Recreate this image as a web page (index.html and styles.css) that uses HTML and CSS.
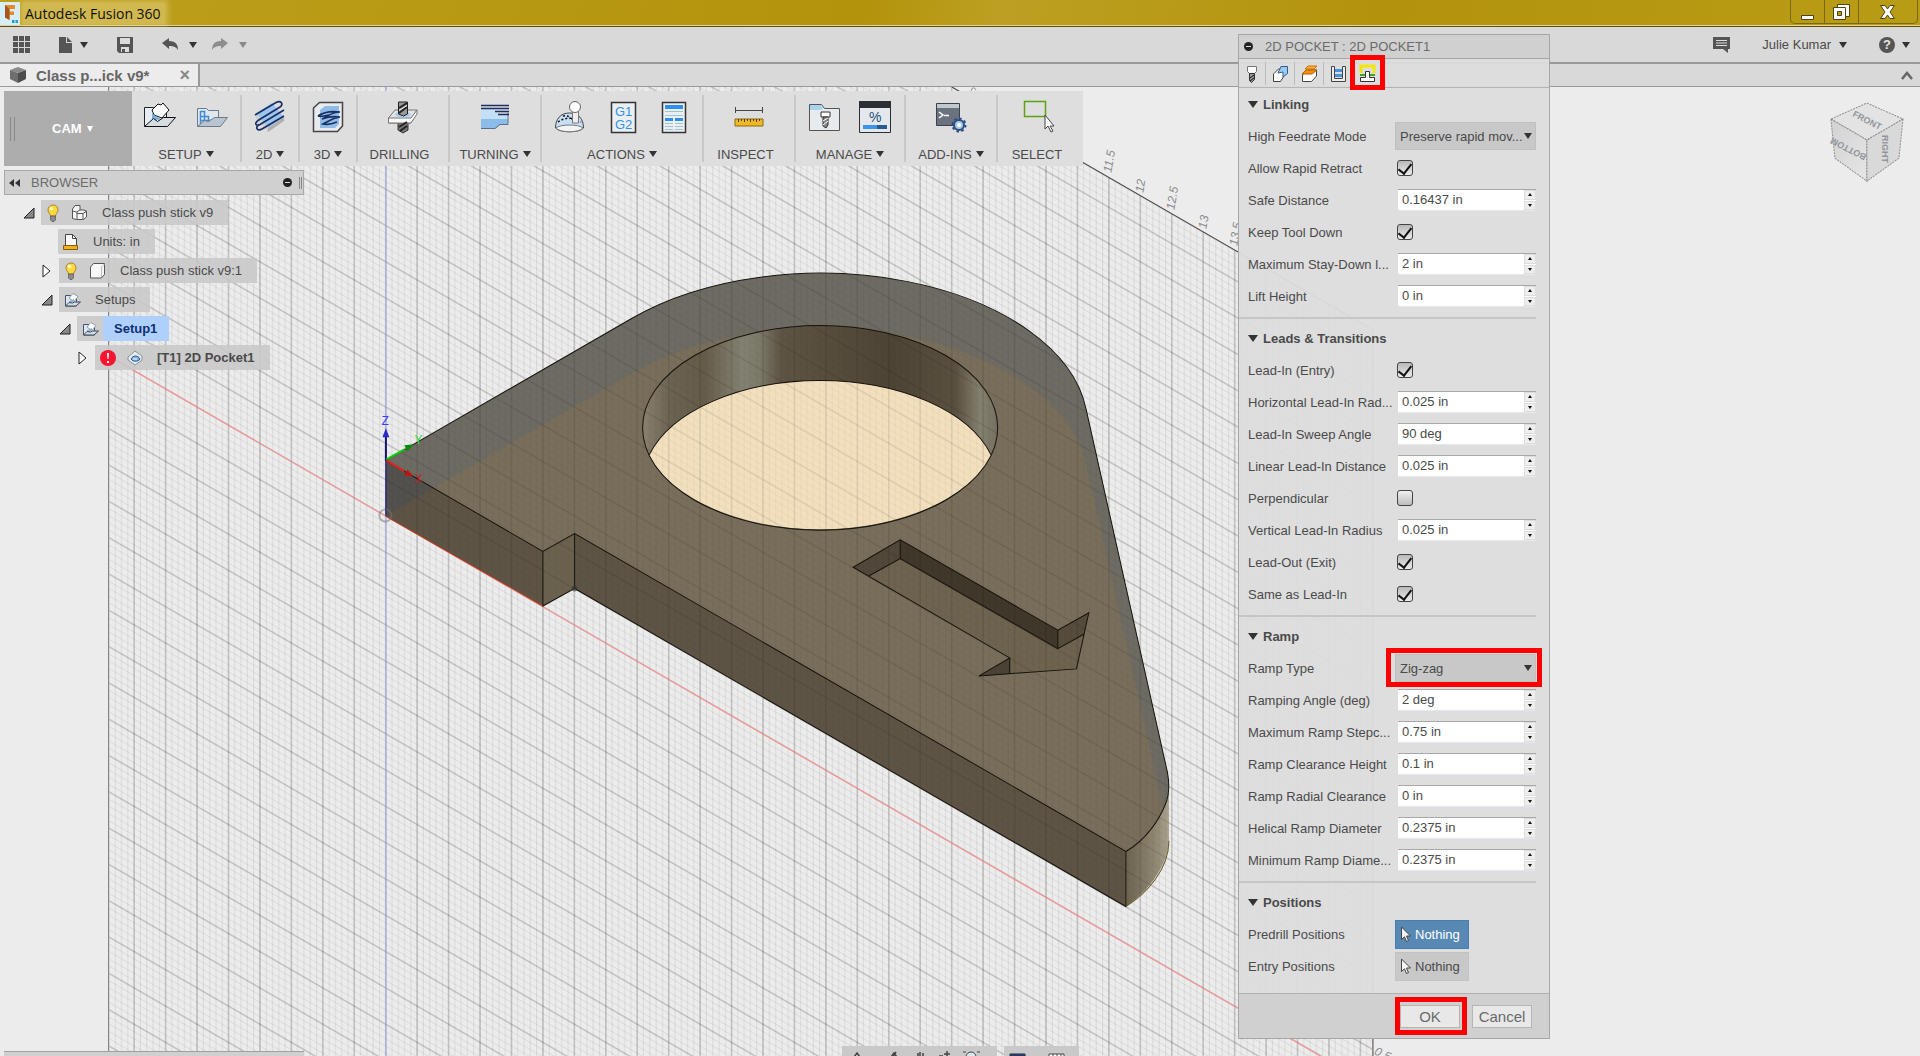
FILE: index.html
```html
<!DOCTYPE html>
<html lang="en">
<head>
    <meta charset="UTF-8">
    <meta name="viewport" content="width=device-width, initial-scale=1.0">
    <title>Autodesk Fusion 360</title>
    <link rel="stylesheet" href="styles.css">
</head>
<body>

    <!-- Shared icons -->
    <svg class="defs" width="0" height="0">
        <symbol id="bulb" viewBox="0 0 14 18">
            <path d="M7 1C3.500 1 2 3.500 2 6c0 3 2.500 3.500 2.500 6h5C9.500 9.500 12 9 12 6c0-2.500-1.500-5-5-5z" fill="#ffd83d" stroke="#a8862c"/>
            <circle cx="5.500" cy="4.500" r="1.800" fill="#fff8cf"/>
            <path d="M4.500 12h5v4l-1.500 1.500h-2L4.500 16z" fill="#8c8c8c" stroke="#444" stroke-width=".6"/>
        </symbol>
        <symbol id="setup" viewBox="0 0 17 16">
            <path d="M1.500 14V3.500h5L8 5h4.500v9z" fill="#dde6f0" stroke="#46536a"/>
            <path d="M5 6l4-4.500 5 3L10 9.500z" fill="#fff" stroke="#7d8b9c" stroke-width=".8"/>
            <path d="M5 9v3l5-2.500V7z" fill="#8fb4dc"/>
            <path d="M1.500 14l3.500-3.500 3.500.5 2-1h6L12 14z" fill="#d3dbe4" stroke="#3c4659"/>
        </symbol>
        <symbol id="cursor" viewBox="0 0 12 17">
            <path d="M1.500 1v12.500l3-2.700 2 4.700 2-.9-2-4.600h4z" fill="#f4f4f4" stroke="#444"/>
        </symbol>
    </svg>

    <header class="titlebar">
        <svg class="app-icon" width="20" height="23" viewBox="0 0 20 23">
            <path d="M0 0h20v23H0z" fill="#d6eef9"/>
            <path d="M5 3h10v4H9.500v2.500H14V13H9.500v5L5 15.500z" fill="#e58a2b"/>
            <path d="M5 3l4.500 4v11L5 15.500z" fill="#a9551a"/>
            <path d="M12 18h2.500v3H12zm3.500 0H18v3h-2.500z" fill="#1a9ed9"/>
        </svg>
        <span class="app-name">Autodesk Fusion 360</span>
        <div class="window-buttons">
            <button aria-label="Minimize"><svg width="16" height="18"><path d="M1.500 12.500h12v4h-12z" fill="#fff" stroke="#4d4410"/></svg></button>
            <button aria-label="Restore"><svg width="20" height="18"><path d="M5.500 1.500h12v12h-12z" fill="#fff" stroke="#4d4410"/><path d="M1.500 4.500h12v12h-12z" fill="#fff" stroke="#4d4410"/><path d="M5.500 8.500h4v4h-4z" fill="#b99b14" stroke="#4d4410"/></svg></button>
            <button aria-label="Close"><svg width="18" height="16"><path d="M1.500 1.500h4.500l2.500 3.500 2.500-3.500h4.500L11 8l4.500 6.500H11L8.500 11 6 14.500H1.500L6 8z" fill="#fff" stroke="#4d4410"/></svg></button>
        </div>
    </header>

    <div class="appbar">
        <div class="quick">
            <button aria-label="Data panel"><svg width="17" height="17" fill="#555"><path d="M0 0h5v5H0zM6 0h5v5H6zM12 0h5v5h-5zM0 6h5v5H0zM6 6h5v5H6zM12 6h5v5h-5zM0 12h5v5H0zM6 12h5v5H6zM12 12h5v5h-5z"/></svg></button>
            <button class="file" aria-label="File"><svg width="13" height="16" fill="#555"><path d="M0 0h7v6h6v10H0z"/><path d="M8 0l5 5H8z"/></svg><span class="caret"></span></button>
            <button class="save" aria-label="Save"><svg width="16" height="16"><path d="M0 0h16v16H2l-2-2z" fill="#555"/><path d="M3 1h10v6H3zM4 10h8v5H4z" fill="#dcdcdc"/><path d="M5 12h3v3H5z" fill="#555"/></svg></button>
            <button class="undo" aria-label="Undo"><svg width="17" height="13"><path d="M0 5l7-5v3c6 0 9 3 9 9-2-3-4-4-9-4v3z" fill="#555"/></svg><span class="caret"></span></button>
            <button class="redo" aria-label="Redo"><svg width="17" height="13"><path d="M16 5L9 0v3C3 3 0 6 0 12c2-3 4-4 9-4v3z" fill="#8d8d8d"/></svg><span class="caret"></span></button>
        </div>
        <div class="account">
            <button aria-label="Comments"><svg width="17" height="16"><path d="M0 0h17v12h-2v4l-5-4H0z" fill="#555"/><path d="M3 3.500h11M3 6h11M3 8.500h11" stroke="#ddd"/></svg></button>
            <button class="user">Julie Kumar <span class="caret"></span></button>
            <button class="help" aria-label="Help"><span class="help-mark">?</span><span class="caret"></span></button>
        </div>
    </div>

    <nav class="tabs">
        <a class="tab" href="#">
            <svg width="17" height="16"><path d="M0 3l8-3 8 3-8 3z" fill="#8a8a8a"/><path d="M0 3l8 3v10l-8-4z" fill="#6e6e6e"/><path d="M16 3L8 6v10l8-4z" fill="#4c4c4c"/></svg>
            <span>Class p...ick v9*</span>
            <span class="close">×</span>
        </a>
        <button class="collapse" aria-label="Collapse"><svg width="12" height="9"><path d="M1 8l5-6 5 6" fill="none" stroke="#666" stroke-width="2.500"/></svg></button>
    </nav>

    <main class="workspace">

        <!-- 3D canvas -->
        <svg class="canvas" viewBox="0 88 1920 968" preserveAspectRatio="xMidYMid slice">
            <defs>
                <!-- isometric grid: one major cell split in five, sheared by 30 degrees -->
                <pattern id="grid" width="31.410" height="36.270" patternUnits="userSpaceOnUse" patternTransform="translate(386.300 516.500) skewY(30)">
                    <path d="M6.280 0v37M12.560 0v37M18.840 0v37M25.120 0v37" stroke="#000" stroke-opacity=".08"/>
                    <path d="M0 7.250h32M0 14.500h32M0 21.750h32M0 29h32" stroke="#000" stroke-opacity=".08"/>
                    <path d="M0 0v37M31.410 0v37" stroke="#000" stroke-opacity=".3"/>
                    <path d="M0 0h32M0 36.270h32" stroke="#000" stroke-opacity=".32"/>
                </pattern>
                <linearGradient id="bore" x1="643" x2="998" y1="0" y2="0" gradientUnits="userSpaceOnUse">
                    <stop offset="0" stop-color="#8a826f"/>
                    <stop offset=".08" stop-color="#6b6351"/>
                    <stop offset=".17" stop-color="#655b49"/>
                    <stop offset=".28" stop-color="#838171"/>
                    <stop offset=".33" stop-color="#7c7969"/>
                    <stop offset=".39" stop-color="#5e5443"/>
                    <stop offset=".7" stop-color="#4d4435"/>
                    <stop offset=".88" stop-color="#5a5040"/>
                    <stop offset=".95" stop-color="#85816f"/>
                    <stop offset="1" stop-color="#757061"/>
                </linearGradient>
                <linearGradient id="tip" x1="1126" x2="1169" y1="0" y2="0" gradientUnits="userSpaceOnUse">
                    <stop offset="0" stop-color="#6c6350"/>
                    <stop offset=".7" stop-color="#918973"/>
                    <stop offset="1" stop-color="#aaa38f"/>
                </linearGradient>
                <linearGradient id="cubeLeft" x2="1" y2="1">
                    <stop offset="0" stop-color="#d2d2d2"/>
                    <stop offset="1" stop-color="#e6e6e6"/>
                </linearGradient>
                <clipPath id="gridArea"><path d="M110 88H952L1372 330.500V1056H110z"/></clipPath>
                <path id="top" d="M386.300 461L631.500 319.500A267 154.200 0 0 1 1086 410L1167.300 773C1169 783 1170 794 1165 805C1159 820 1146 840 1125.700 851.700L575 534L543.300 552z"/>
                <clipPath id="topClip"><use href="#top"/></clipPath>
            </defs>

            <path class="sky" d="M0 88h1920v968H0z"/>
            <g clip-path="url(#gridArea)">
                <path d="M110 88h1262v968H110z" fill="url(#grid)"/>
            </g>
            <path d="M109.500 88V1056" stroke="#777"/>
            <path d="M952 88L1372.500 330.500V1056" fill="none" stroke="#444"/>
            <path d="M971 92q2-6 5-1M978 92l3 3" fill="none" stroke="#999"/>
            <path d="M110 357L1320 1056" stroke="#ff8d8d"/>
            <path d="M386.500 88V1056" stroke="#a5a5ee"/>

            <g class="scale">
                <text transform="translate(1111 174) rotate(-80)">11.5</text>
                <text transform="translate(1143 194) rotate(-80)">12</text>
                <text transform="translate(1174 211) rotate(-80)">12.5</text>
                <text transform="translate(1206 230) rotate(-80)">13</text>
                <text transform="translate(1237 247) rotate(-80)">13.5</text>
                <text transform="translate(1373 1054) rotate(25)">0.5</text>
            </g>

            <!-- part body -->
            <use href="#top" fill="#6d6b62"/>
            <g clip-path="url(#topClip)">
                <use href="#top" y="55" fill="#786e5b"/>
                <path d="M386 516L543 610 1126 907V780L560 500z" fill="#786e5b"/>
            </g>
            <path d="M386.300 461L543.300 552V606.500L386.300 516.500z" fill="#5d5445"/>
            <path d="M386.300 461L434 488.500 386.300 516.500z" fill="#53514d"/>
            <path d="M543.300 552L575 534V589L543.300 606.500z" fill="#6b624e"/>
            <path d="M575 534L1125.700 851.700V906.700L575 589z" fill="#5d5445"/>
            <path d="M1125.700 851.700C1146 840 1159 820 1165 805Q1168.700 796 1168.700 785V841Q1168.700 850 1165 859C1157 879 1144 894 1125.700 906.700z" fill="url(#tip)"/>

            <!-- through hole -->
            <ellipse cx="820.300" cy="428.500" rx="177.400" ry="102.200" fill="url(#bore)"/>
            <path d="M649.600 455.500A177.400 102.200 0 0 1 991 455.500A177.400 102.200 0 0 1 649.600 455.500z" fill="#f2dfbd"/>

            <!-- arrow pocket -->
            <path d="M853.300 567.700L900.300 540.300 1057.700 630.700 1088.700 613.300 1076.300 669.300 979 676.300 1009.700 658.300z" fill="#6d634f"/>
            <path d="M853.300 567.700L900.300 540.300V559L869.300 576.300z" fill="#51483a"/>
            <path d="M900.300 540.300L1057.700 630.700V649L900.300 559z" fill="#3f382b"/>
            <path d="M1057.700 630.700L1088.700 613.300 1083.700 634.700 1057.700 649z" fill="#554c3c"/>
            <path d="M979 676.300L1009.700 658.300V674.300z" fill="#4b4335"/>

            <!-- grid seen through the part -->
            <path d="M386.300 461L631.500 319.500A267 154.200 0 0 1 1086 410L1167.300 773Q1170 785 1168.700 841Q1166 880 1125.700 906.700L575 589 543.300 606.500 386.300 516.500z" fill="url(#grid)" opacity=".5"/>

            <g class="edges">
                <use href="#top"/>
                <ellipse cx="820.300" cy="428.500" rx="177.400" ry="102.200"/>
                <path d="M649.600 455.500A177.400 102.200 0 0 1 991 455.500"/>
                <path d="M853.300 567.700L900.300 540.300 1057.700 630.700 1088.700 613.300 1076.300 669.300 979 676.300 1009.700 658.300z"/>
                <path d="M869.300 576.300L900.300 559 1057.700 649 1083.700 634.700M900.300 540.300V559M1057.700 630.700V649M1009.700 658.300V674.300"/>
                <path d="M543.300 552V606.500L575 589V534M1125.700 851.700V906.700L575 589"/>
                <path d="M1168.700 841C1168.700 870 1146 894 1125.700 906.700" stroke="#6b5a2c"/>
            </g>
            <path d="M386.300 516.500L543.300 606.500" stroke="#a83c20"/>
            <circle cx="575" cy="589" r="3" fill="#333" opacity=".6"/>
            <circle cx="386" cy="516" r="6" fill="none" stroke="#777" stroke-width="2" opacity=".5"/>

            <!-- origin triad -->
            <path d="M386.500 516V461" stroke="#1c1c8c"/>
            <path d="M386.500 461V435" stroke="#15156b" stroke-width="2"/>
            <path d="M386.500 429l3.500 9h-7z" fill="#2a2ac8"/>
            <path d="M387 460L405 450" stroke="#0bd20b" stroke-width="2"/>
            <path d="M414 445l-9 1 3 6z" fill="#0a8a0a"/>
            <path d="M387 461L405 472" stroke="#e32020" stroke-width="2"/>
            <path d="M414 477l-6-7-3 6z" fill="#c01212"/>
            <text x="382" y="426" class="axis z">Z</text>
            <text x="415" y="445" class="axis y">Y</text>
            <text x="415" y="484" class="axis x">X</text>

            <!-- view cube -->
            <g stroke="#8e8e8e" stroke-dasharray="2 1">
                <path d="M1866 104L1902 120 1866 141 1830 120z" fill="#e3e3e3"/>
                <path d="M1830 120L1866 141V182L1834 159z" fill="url(#cubeLeft)"/>
                <path d="M1902 120L1866 141V182L1898 159z" fill="#d9d9d9"/>
            </g>
            <g class="cube-text">
                <text transform="translate(1851 117) rotate(27)">FRONT</text>
                <text transform="translate(1866 156) rotate(207)">BOTTOM</text>
                <text transform="translate(1881 136) rotate(90)">RIGHT</text>
            </g>
        </svg>

        <div class="overlay">
            <div class="ribbon">
                <button class="cam"><span class="grip"></span>CAM <span class="caret"></span></button>

                <section class="group setup">
                    <div class="icons">
                        <svg width="34" height="32" viewBox="0 0 34 32">
                            <path d="M1.500 25V6.500h9l2 2h11V25z" fill="#e6edf5" stroke="#222"/>
                            <path d="M9 9l6-6 3 1 2-2 6 7-7 8-8-3z" fill="#fff" stroke="#111"/>
                            <path d="M9 12v8l9-2-7-4z" fill="#7db0e0"/>
                            <path d="M1.500 25.500l9-8 4 3 6-4h12l-8 9z" fill="#d4dce4" stroke="#111"/>
                        </svg>
                        <svg width="34" height="32" viewBox="0 0 34 32">
                            <path d="M2.500 25V7.500h9l2 2h10V25z" fill="#dfe6ed" stroke="#6d7a88"/>
                            <path d="M5.500 10v13M5.500 10.500h4v5h4v8M5.500 15.500h8M9.500 15v8M5.500 19.500h10" fill="none" stroke="#3f8bd6" stroke-width="1.500"/>
                            <path d="M2.500 25.500l7-6 4 1 6-4h13l-7 9z" fill="#b8c4d0" stroke="#6d7a88"/>
                        </svg>
                    </div>
                    <button class="label">SETUP <span class="caret"></span></button>
                </section>
                <section class="group two-d">
                    <div class="icons">
                        <svg width="34" height="34" viewBox="0 0 34 34">
                            <path d="M3 13L19 3l12 14-16 11z" fill="#9cc6ee"/>
                            <path d="M15 28l16-11v4L15 32z" fill="#b0b0b0"/>
                            <path d="M3 13l12 15v4L3 18z" fill="#d0d0d0"/>
                            <path d="M2 15L23 2.500c5-2.500 8 1.500 4 4.500L5 20.500c-4 3-2 6 2 4L31 10M31 16L9 29c-5 3-7-2-3-4.500" fill="none" stroke="#1b2f66" stroke-width="1.700"/>
                        </svg>
                    </div>
                    <button class="label">2D <span class="caret"></span></button>
                </section>
                <section class="group three-d">
                    <div class="icons">
                        <svg width="32" height="32" viewBox="0 0 32 32">
                            <path d="M1.500 7l6-5.500h23V25l-5 5.500h-24z" fill="#e9ecef" stroke="#444" stroke-width="1.500"/>
                            <path d="M8 9l5-4h14v18l-4 4H8z" fill="#8fbde8"/>
                            <path d="M6 15c7-5 14-5 22-4-8 0-12 4-18 7 5-2 11-3 18-2-8 1-11 4-17 7 5 1 9 0 14-2M6 15c2 1 7 0 11-1" fill="none" stroke="#1b2f66" stroke-width="1.600"/>
                        </svg>
                    </div>
                    <button class="label">3D <span class="caret"></span></button>
                </section>
                <section class="group drilling">
                    <div class="icons">
                        <svg width="32" height="34" viewBox="0 0 32 34">
                            <path d="M11 20h10v10l-5 3-5-3z" fill="#777" stroke="#333"/>
                            <path d="M1.500 18L8 10h22l-6 9v4H1.500z" fill="#e3e3e3" stroke="#777"/>
                            <path d="M1.500 18H24l6-8v4l-6 9H1.500z" fill="#fafafa" stroke="#777"/>
                            <ellipse cx="16" cy="14.500" rx="8" ry="3" fill="#a8ccec"/>
                            <path d="M11.500 2h9v12l-4 2-5-2z" fill="#999" stroke="#222"/>
                            <path d="M12 8l8-5M12 13l8-6M12 27l8-5M13 31l7-5" stroke="#222" stroke-width="2"/>
                            <path d="M12 10.500l8-5" stroke="#eee"/>
                        </svg>
                    </div>
                    <button class="label plain">DRILLING</button>
                </section>
                <section class="group turning">
                    <div class="icons">
                        <svg width="30" height="28" viewBox="0 0 30 28">
                            <path d="M1 6h12l7 7h8v9h-8l-5 4H1z" fill="#8bbcea"/>
                            <path d="M1 6h12l7 7h8v3H1z" fill="#c4e0f7"/>
                            <path d="M28 9.500v12h-8l-5 4H1" fill="none" stroke="#5b6f88"/>
                            <path d="M1 2.500h28M1 5.500h28M15 8.500h14M18 11.500h11" stroke="#1b2f66" stroke-width="1.500"/>
                        </svg>
                    </div>
                    <button class="label">TURNING <span class="caret"></span></button>
                </section>
                <section class="group actions">
                    <div class="icons">
                        <svg width="32" height="34" viewBox="0 0 32 34">
                            <path d="M1.500 28c0-9 5-15 14-15s14 6 14 15c-4 5-24 5-28 0z" fill="#c6dff5" stroke="#444"/>
                            <path d="M2 28c4-4 23-4 27 0-4 5-23 5-27 0z" fill="#f4f4f4" stroke="#777"/>
                            <path d="M4 22c7-5 15-5 23 0M9 16c4-1 9 1 12 8" fill="none" stroke="#111" stroke-width="1.500" stroke-dasharray="2 2"/>
                            <path d="M18.500 11h6v12h-6z" fill="#eee" stroke="#777"/>
                            <circle cx="21" cy="7" r="5.500" fill="#fff" stroke="#666"/>
                        </svg>
                        <svg class="post" width="27" height="33">
                            <path d="M1.500 1.500h24v30h-24z" fill="#eceff2" stroke="#333" stroke-width="1.500"/>
                            <text x="5" y="15">G1</text><text x="5" y="28">G2</text>
                        </svg>
                        <svg width="26" height="33">
                            <path d="M1.500 1.500h23v30h-23z" fill="#eceff2" stroke="#333" stroke-width="1.500"/>
                            <path d="M4 4h18v4H4zM4 17h8v3H4zM14 17h8v3h-8z" fill="#2f8fef"/>
                            <path d="M4 10.500h18M4 14.500h18M4 22.500h8M14 22.500h8M4 25.500h8M14 25.500h8M4 28.500h8M14 28.500h8" stroke="#9cc4d8"/>
                        </svg>
                    </div>
                    <button class="label">ACTIONS <span class="caret"></span></button>
                </section>
                <section class="group inspect">
                    <div class="icons">
                        <svg width="30" height="22">
                            <path d="M1.500 1v6M28.500 1v6M1 4.500h28" stroke="#444" fill="none"/>
                            <path d="M1 13h28v7H1z" fill="#efb925" stroke="#8b6a12"/>
                            <path d="M4.500 13v3M7.500 13v2M10.500 13v3M13.500 13v2M16.500 13v3M19.500 13v2M22.500 13v3M25.500 13v2" stroke="#5a4205"/>
                        </svg>
                    </div>
                    <button class="label plain">INSPECT</button>
                </section>
                <section class="group manage">
                    <div class="icons">
                        <svg width="33" height="32">
                            <path d="M1.500 29.500V3.500h12l3 4h15v22z" fill="#e8ebee" stroke="#555"/>
                            <path d="M2 4h11l2 3-2 2H2z" fill="#acd3ee"/>
                            <path d="M13 11h9v5h-9z" fill="#fff" stroke="#333"/><path d="M15 16h5v8l-2 3-3-2z" fill="#888" stroke="#333"/>
                            <path d="M15 20l5-3M15 24l5-4" stroke="#fff"/>
                        </svg>
                        <svg class="percent" width="33" height="33">
                            <path d="M.500.500h31v31H.500z" fill="#e4e8ed" stroke="#2b2e33"/>
                            <path d="M0 0h32v7H0z" fill="#2b2e33"/>
                            <path d="M4 24h14v4H4z" fill="#3a94ee"/><path d="M18 24h10v4H18z" fill="#285a8e"/>
                            <text x="10" y="21">%</text>
                        </svg>
                    </div>
                    <button class="label">MANAGE <span class="caret"></span></button>
                </section>
                <section class="group addins">
                    <div class="icons">
                        <svg width="32" height="32" viewBox="0 0 32 32">
                            <path d="M1.500 2.500h23v22h-23z" fill="#6a727e" stroke="#3b424d"/>
                            <path d="M2 3h22v4H2z" fill="#c3c8ce"/>
                            <path d="M4 11l4 3-4 3M9 14.500h5" fill="none" stroke="#fff" stroke-width="1.500"/>
                            <circle cx="24" cy="24" r="5" fill="#a9c8e8" stroke="#2d4f80" stroke-width="2"/>
                            <circle cx="24" cy="24" r="6.500" fill="none" stroke="#2d4f80" stroke-width="2" stroke-dasharray="2.500 2.500"/>
                            <circle cx="24" cy="24" r="2" fill="#fff"/>
                        </svg>
                    </div>
                    <button class="label">ADD-INS <span class="caret"></span></button>
                </section>
                <section class="group select">
                    <div class="icons">
                        <svg width="32" height="34">
                            <path d="M1.500 1.500h21v15h-21z" fill="none" stroke="#5da30f" stroke-width="1.500"/>
                            <path d="M22 15v14l3-3 3 6 2-1-3-5h4z" fill="#fff" stroke="#444"/>
                        </svg>
                    </div>
                    <button class="label plain">SELECT</button>
                </section>
            </div>

            <div class="browser-head">
                <svg width="11" height="8"><path d="M5 0v8L0 4zM11 0v8L6 4z" fill="#333"/></svg>
                <span>BROWSER</span>
                <i class="minus"></i>
                <i class="grip"></i>
            </div>
            <ul class="tree">
                <li class="level0"><svg class="twist" width="12" height="12"><path d="M11 1v10H1z" fill="#888" stroke="#222"/></svg>
                    <a href="#"><svg width="14" height="18"><use href="#bulb"/></svg><svg width="17" height="17"><path d="M1.500 5L4 1.500h5V6h4l2.500 1v6l-3 2.500h-7l-4-1z" fill="#f5f5f5" stroke="#555"/><path d="M1.500 7l4 1L9 6M6 8v7M6 9.500h6l3-2M12 10v5" fill="none" stroke="#555"/></svg><span>Class push stick v9</span></a></li>
                <li class="level1 units">
                    <a href="#"><svg width="16" height="18"><path d="M2.500 12.500v-11h7l4 4v7z" fill="#f7f9fb" stroke="#444"/><path d="M9.500 1.500v4h4" fill="none" stroke="#444"/><path d="M.500 12.500h14v4H.500z" fill="#f0b21f" stroke="#8b5a0a"/></svg><span>Units: in</span></a></li>
                <li class="level1"><svg class="twist" width="12" height="14"><path d="M2 1v12l7-6z" fill="#fff" stroke="#222"/></svg>
                    <a href="#"><svg width="14" height="18"><use href="#bulb"/></svg><svg width="17" height="17"><path d="M1.500 5l3-3.500h11v11l-3 3.500h-11z" fill="#f7f7f7" stroke="#555"/><path d="M12.500 15V5l3-3" fill="none" stroke="#bbb"/></svg><span>Class push stick v9:1</span></a></li>
                <li class="level1"><svg class="twist" width="12" height="12"><path d="M11 1v10H1z" fill="#888" stroke="#222"/></svg>
                    <a href="#"><svg width="17" height="16"><use href="#setup"/></svg><span>Setups</span></a></li>
                <li class="level2 active"><svg class="twist" width="12" height="12"><path d="M11 1v10H1z" fill="#888" stroke="#222"/></svg>
                    <a href="#"><svg width="17" height="16"><use href="#setup"/></svg><span>Setup1</span></a></li>
                <li class="level3"><svg class="twist" width="12" height="14"><path d="M2 1v12l7-6z" fill="#fff" stroke="#222"/></svg>
                    <a href="#"><svg width="16" height="16"><circle cx="8" cy="8" r="8" fill="#f5152f"/><path d="M7 3h2l-.5 6h-1zM7 11h2v2H7z" fill="#fff"/></svg><svg width="16" height="16"><path d="M1 7l7-6 7 5v4l-7 5-7-5z" fill="#e8ecf0" stroke="#8a929a"/><path d="M4 9c2-4 7-4 9 0-2 3-7 3-9 0z" fill="#7eb2e4" stroke="#28568c"/><path d="M6 9h4" stroke="#fff"/></svg><span>[T1] 2D Pocket1</span></a></li>
            </ul>
        </div>

        <div class="bottom-panel"></div>
        <div class="navbar">
            <div class="nav-part">
                <svg width="145" height="10"><path d="M7 9l3-4 3 4M44 9l3-4 3 4M46 9l3-5M71 9V5M73 9V4M76 9V5M92 8h4M100 3v6M97 6h6" fill="none" stroke="#444" stroke-width="1.500"/><circle cx="124" cy="9" r="5" fill="#d5eaf0" stroke="#444"/><path d="M116 4h3M130 4h3" stroke="#444"/></svg>
            </div>
            <div class="nav-part">
                <svg width="65" height="10"><path d="M1 6h15v5H1z" fill="#fff" stroke="#222"/><path d="M1 6h15v2H1z" fill="#263a66"/><path d="M40 6h15v5H40zM44 6v5M48 6v5M52 6v5" fill="#fff" stroke="#444"/></svg>
            </div>
        </div>
    </main>

    <!-- 2D Pocket dialog -->
    <form class="dialog">
        <h2 class="dialog-title"><i class="minus"></i>2D POCKET : 2D POCKET1</h2>
        <div class="dialog-tabs">
            <button type="button" aria-label="Tool"><svg width="12" height="18"><path d="M1.500 1.500h9v5l-2 2h-5l-2-2z" fill="#fafafa" stroke="#777"/><path d="M3.500 8.500h5v6l-3 3-2-2z" fill="#999" stroke="#333"/><path d="M4 13l4-3M4 16l4-3" stroke="#111"/></svg></button>
            <button type="button" aria-label="Geometry"><svg width="17" height="18"><path d="M1.500 9l5-5h6v6l-4 6.500h-7z" fill="#fff" stroke="#444"/><path d="M6 8l3-6.500h6.500v7L11 12V7z" fill="#9ccaf2" stroke="#2c5d8f"/></svg></button>
            <button type="button" aria-label="Heights"><svg width="17" height="18"><path d="M1.500 10l5-5h9v6l-5 5.500h-9z" fill="#fff" stroke="#444"/><path d="M1 9l4-4h11l-5 4z" fill="#f58f12" stroke="#b96100"/><path d="M4 4l3-3h9l-3 3z" fill="#ffb03b" stroke="#c97000"/></svg></button>
            <button type="button" aria-label="Passes"><svg width="17" height="18"><path d="M1.500 1.500h3v12h8v-12h3v15h-14z" fill="#eee" stroke="#444"/><path d="M5 4h7v3H5zM5 9h7v3H5z" fill="#4b93d8"/></svg></button>
            <button type="button" class="marked" aria-label="Linking"><svg width="17" height="19"><path d="M2 9V2h13v7" fill="none" stroke="#f4e500" stroke-width="3"/><path d="M1 10h5v2H1zM11 10h5v2h-5z" fill="#3aa82e"/><path d="M6.500 7.500h4v6h5v4h-14v-4h5z" fill="#fff" stroke="#333"/></svg></button>
        </div>

        <div class="sections">
            <fieldset>
                <legend><span class="caret"></span>Linking</legend>
                <div class="row"><label for="feed">High Feedrate Mode</label><div class="pick"><select id="feed"><option>Preserve rapid mov...</option></select></div></div>
                <div class="row"><label for="retract">Allow Rapid Retract</label><input type="checkbox" id="retract" checked></div>
                <div class="row"><label for="safe">Safe Distance</label><div class="num"><input type="text" id="safe" value="0.16437 in"><span class="spin"><button type="button" class="up" aria-label="Up"></button><button type="button" class="down" aria-label="Down"></button></span></div></div>
                <div class="row"><label for="keep">Keep Tool Down</label><input type="checkbox" id="keep" checked></div>
                <div class="row"><label for="stay">Maximum Stay-Down l...</label><div class="num"><input type="text" id="stay" value="2 in"><span class="spin"><button type="button" class="up" aria-label="Up"></button><button type="button" class="down" aria-label="Down"></button></span></div></div>
                <div class="row"><label for="lift">Lift Height</label><div class="num"><input type="text" id="lift" value="0 in"><span class="spin"><button type="button" class="up" aria-label="Up"></button><button type="button" class="down" aria-label="Down"></button></span></div></div>
            </fieldset>

            <fieldset>
                <legend><span class="caret"></span>Leads &amp; Transitions</legend>
                <div class="row"><label for="leadin">Lead-In (Entry)</label><input type="checkbox" id="leadin" checked></div>
                <div class="row"><label for="hrad">Horizontal Lead-In Rad...</label><div class="num"><input type="text" id="hrad" value="0.025 in"><span class="spin"><button type="button" class="up" aria-label="Up"></button><button type="button" class="down" aria-label="Down"></button></span></div></div>
                <div class="row"><label for="sweep">Lead-In Sweep Angle</label><div class="num"><input type="text" id="sweep" value="90 deg"><span class="spin"><button type="button" class="up" aria-label="Up"></button><button type="button" class="down" aria-label="Down"></button></span></div></div>
                <div class="row"><label for="linear">Linear Lead-In Distance</label><div class="num"><input type="text" id="linear" value="0.025 in"><span class="spin"><button type="button" class="up" aria-label="Up"></button><button type="button" class="down" aria-label="Down"></button></span></div></div>
                <div class="row"><label for="perp">Perpendicular</label><input type="checkbox" id="perp"></div>
                <div class="row"><label for="vrad">Vertical Lead-In Radius</label><div class="num"><input type="text" id="vrad" value="0.025 in"><span class="spin"><button type="button" class="up" aria-label="Up"></button><button type="button" class="down" aria-label="Down"></button></span></div></div>
                <div class="row"><label for="leadout">Lead-Out (Exit)</label><input type="checkbox" id="leadout" checked></div>
                <div class="row"><label for="same">Same as Lead-In</label><input type="checkbox" id="same" checked></div>
            </fieldset>

            <fieldset>
                <legend><span class="caret"></span>Ramp</legend>
                <div class="row"><label for="ramp">Ramp Type</label><div class="pick marked"><select id="ramp"><option>Zig-zag</option></select></div></div>
                <div class="row"><label for="angle">Ramping Angle (deg)</label><div class="num"><input type="text" id="angle" value="2 deg"><span class="spin"><button type="button" class="up" aria-label="Up"></button><button type="button" class="down" aria-label="Down"></button></span></div></div>
                <div class="row"><label for="step">Maximum Ramp Stepc...</label><div class="num"><input type="text" id="step" value="0.75 in"><span class="spin"><button type="button" class="up" aria-label="Up"></button><button type="button" class="down" aria-label="Down"></button></span></div></div>
                <div class="row"><label for="clear">Ramp Clearance Height</label><div class="num"><input type="text" id="clear" value="0.1 in"><span class="spin"><button type="button" class="up" aria-label="Up"></button><button type="button" class="down" aria-label="Down"></button></span></div></div>
                <div class="row"><label for="radial">Ramp Radial Clearance</label><div class="num"><input type="text" id="radial" value="0 in"><span class="spin"><button type="button" class="up" aria-label="Up"></button><button type="button" class="down" aria-label="Down"></button></span></div></div>
                <div class="row"><label for="helical">Helical Ramp Diameter</label><div class="num"><input type="text" id="helical" value="0.2375 in"><span class="spin"><button type="button" class="up" aria-label="Up"></button><button type="button" class="down" aria-label="Down"></button></span></div></div>
                <div class="row"><label for="mindia">Minimum Ramp Diame...</label><div class="num"><input type="text" id="mindia" value="0.2375 in"><span class="spin"><button type="button" class="up" aria-label="Up"></button><button type="button" class="down" aria-label="Down"></button></span></div></div>
            </fieldset>

            <fieldset>
                <legend><span class="caret"></span>Positions</legend>
                <div class="row"><label for="predrill">Predrill Positions</label><button type="button" class="nothing on" id="predrill"><svg width="12" height="17"><use href="#cursor"/></svg>Nothing</button></div>
                <div class="row"><label for="entry">Entry Positions</label><button type="button" class="nothing" id="entry"><svg width="12" height="17"><use href="#cursor"/></svg>Nothing</button></div>
            </fieldset>
        </div>

        <div class="dialog-foot">
            <button type="button" class="marked">OK</button>
            <button type="button">Cancel</button>
        </div>
    </form>

</body>
</html>
```
FILE: styles.css
```css
* {
    box-sizing: border-box;
}
body {
    margin: 0;
    height: 100vh;
    display: flex;
    flex-direction: column;
    overflow: hidden;
    background-color: #ececec;
    color: #4a4a4a;
    font-family: "Liberation Sans", Arial, sans-serif;
    font-size: 13px;
    position: relative;
}
button {
    border: none;
    background: none;
    padding: 0;
    color: inherit;
    font: inherit;
    cursor: pointer;
}
a {
    color: inherit;
    text-decoration: none;
}
svg {
    flex: none;
}
.defs {
    position: absolute;
}
.caret {
    display: inline-block;
    border: 4px solid transparent;
    border-top: 6px solid #333;
    border-bottom: none;
    flex: none;
}

/* Title bar */
.titlebar {
    height: 27px;
    flex: none;
    display: flex;
    align-items: center;
    background: linear-gradient(100deg, #bd9f1f 0%, #b99a14 22%, #b3930c 45%, #bda022 52%, #b3930d 72%, #b99c15 100%);
    border-bottom: 1px solid #5c4d10;
    box-shadow: inset 0 -1px #e5d48a;
    color: #111;
}
.app-name {
    margin-left: 3px;
    padding: 1px 4px 0 2px;
    font-family: "Open Sans", sans-serif;
    font-size: 14px;
    line-height: 20px;
    background-color: rgba(240, 225, 160, .4);
    box-shadow: 0 0 6px 3px rgba(240, 225, 160, .4);
}
.window-buttons {
    margin: 0 2px 2px auto;
    display: flex;
    height: 24px;
    border: 1px solid #7a6812;
    border-top: none;
    border-radius: 0 0 5px 5px;
}
.window-buttons button {
    width: 34px;
    display: flex;
    justify-content: center;
    align-items: center;
    border-right: 1px solid #7a6812;
}
.window-buttons button:last-child {
    width: 58px;
    border-right: none;
}

/* Application bar */
.appbar {
    height: 37px;
    flex: none;
    display: flex;
    align-items: center;
    justify-content: space-between;
    background-color: #d9d9d9;
    border-bottom: 2px solid #999;
    padding: 0 10px 0 13px;
}
.quick, .account {
    display: flex;
    align-items: center;
    gap: 29px;
}
.quick button, .account button {
    display: flex;
    align-items: center;
    gap: 8px;
}
.quick .undo, .quick .redo {
    gap: 10px;
}
.redo {
    margin-left: -14px;
}
.redo .caret {
    border-top-color: #888;
}
.account {
    gap: 32px;
}
.account .help {
    gap: 7px;
}
.help-mark {
    width: 16px;
    height: 16px;
    border-radius: 8px;
    background-color: #555;
    color: #e8e8e8;
    font-weight: bold;
    line-height: 16px;
}

/* Document tabs */
.tabs {
    height: 23px;
    flex: none;
    display: flex;
    justify-content: space-between;
    background-color: #d9d9d9;
    border-bottom: 1px solid #999;
}
.tab {
    width: 200px;
    display: flex;
    align-items: center;
    gap: 9px;
    padding: 0 8px 0 10px;
    background-color: #ececec;
    border-right: 2px solid #999;
    font-size: 15px;
    font-weight: bold;
    color: #666;
}
.tab .close {
    margin-left: auto;
    font-size: 18px;
    color: #888;
}
.collapse {
    margin-right: 7px;
}

/* Workspace */
.workspace {
    flex: 1;
    min-height: 0;
    position: relative;
    overflow: hidden;
}
.canvas {
    position: absolute;
    width: 100%;
    height: 100%;
}
.sky {
    fill: #ececec;
}
.edges {
    fill: none;
    stroke: #16130c;
    stroke-width: 1;
}
.scale {
    font-size: 12px;
    font-style: italic;
    fill: #8a8a8a;
}
.axis {
    font-size: 12px;
}
.axis.z {
    fill: #3a3aff;
}
.axis.y {
    fill: #2be02b;
}
.axis.x {
    fill: #c32020;
}
.cube-text {
    font-size: 9px;
    font-weight: bold;
    fill: #92969c;
}
.overlay {
    position: relative;
    padding: 4px;
}

/* Ribbon */
.ribbon {
    display: flex;
    width: fit-content;
    height: 75px;
    background-color: #dedede;
}
.cam {
    width: 128px;
    display: flex;
    align-items: center;
    gap: 5px;
    background-color: #adadad;
    color: #fff;
    font-weight: bold;
}
.cam .caret {
    border-top-color: #fff;
    border-left-width: 3px;
    border-right-width: 3px;
}
.grip {
    width: 5px;
    height: 24px;
    border: 1px solid #888;
    border-top: none;
    border-bottom: none;
}
.cam .grip {
    margin: 0 32px 0 6px;
}
.group {
    display: flex;
    flex-direction: column;
    align-items: center;
    width: 92px;
    margin: 4px 0;
    border-right: 2px solid #c8c8c8;
}
.group .icons {
    height: 48px;
    display: flex;
    align-items: center;
    gap: 18px;
}
.group .label {
    display: flex;
    align-items: center;
    gap: 4px;
    height: 24px;
}
.group .label {
    padding-top: 7px;
}
.group .plain {
    padding-right: 7px;
}
.group.setup {
    width: 110px;
}
.group.two-d, .group.three-d {
    width: 58px;
}
.group.actions {
    width: 162px;
}
.group.actions .icons {
    gap: 24px;
    padding-right: 4px;
}
.group.manage {
    width: 110px;
}
.group.select {
    width: 85px;
    border-right: none;
}
.group.select .icons {
    padding-right: 4px;
}
.post text {
    font-size: 13px;
    fill: #2f8fef;
}
.percent text {
    font-size: 14px;
    fill: #24507e;
}

/* Browser */
.browser-head {
    display: flex;
    align-items: center;
    width: 300px;
    height: 25px;
    margin-top: 4px;
    padding: 0 1px 0 4px;
    background-color: #d0d0d0;
    border: 1px solid #a8a8a8;
    color: #6b6b6b;
}
.browser-head span {
    flex: 1;
    margin-left: 11px;
}
.browser-head .grip {
    width: 3px;
    height: 12px;
    margin-left: 7px;
}
.minus {
    width: 9px;
    height: 9px;
    border-radius: 5px;
    background: linear-gradient(#ddd, #ddd) center / 5px 1px no-repeat #222;
}
.tree {
    list-style: none;
    margin: 5px 0 0;
    padding: 0;
    display: flex;
    flex-direction: column;
    gap: 4px;
}
.tree li {
    display: flex;
    align-items: center;
    height: 25px;
}
.tree .twist {
    margin-right: 6px;
}
.tree a {
    display: flex;
    align-items: center;
    gap: 14px;
    height: 25px;
    padding: 0 15px 0 5px;
    background-color: rgba(200, 200, 200, .88);
}
.tree svg + svg {
    margin-left: -3px;
}
.level0 {
    padding-left: 19px;
}
.level1 {
    padding-left: 37px;
}
.level1.units {
    padding-left: 54px;
}
.level2 {
    padding-left: 55px;
}
.level3 {
    padding-left: 73px;
    font-weight: bold;
}
.tree .active a {
    gap: 4px;
    padding-right: 0;
}
.active span {
    padding: 0 12px 0 11px;
    line-height: 25px;
    background-color: #aed0fb;
    color: #0f2f73;
    font-weight: bold;
}

/* Bottom bars, cut by the window edge */
.bottom-panel {
    position: absolute;
    left: 4px;
    bottom: 0;
    width: 300px;
    height: 5px;
    background-color: #d0d0d0;
    border-top: 1px solid #a0a0a0;
}
.navbar {
    position: absolute;
    left: 0;
    right: 0;
    bottom: 0;
    display: flex;
    justify-content: center;
    gap: 7px;
    height: 10px;
}
.nav-part {
    padding: 0 5px;
    background-color: #c9c9c9;
}

/* Dialog */
.dialog {
    position: absolute;
    top: 34px;
    right: 370px;
    width: 312px;
    background-color: rgba(221, 221, 221, .96);
    border: 1px solid #a6a6a6;
}
.dialog-title {
    display: flex;
    align-items: center;
    gap: 12px;
    height: 24px;
    margin: 0;
    padding-left: 5px;
    background-color: #d0d0d0;
    border-bottom: 1px solid #a6a6a6;
    color: #6b6b6b;
    font-size: 13px;
    font-weight: normal;
}
.dialog-tabs {
    display: flex;
    height: 29px;
    padding: 3px 0 2px;
    border-bottom: 1px solid #b5b5b5;
}
.dialog-tabs button {
    width: 29px;
    display: flex;
    justify-content: center;
    align-items: center;
    border-right: 1px solid #bbb;
}
.dialog-tabs button:first-child {
    width: 27px;
}
.dialog-tabs button.marked {
    border-right: none;
}
.marked {
    position: relative;
}
.marked::before {
    content: "";
    position: absolute;
    inset: -10px -8px;
    border: 5px solid #f00;
    pointer-events: none;
}
.dialog-tabs .marked::before {
    inset: -7px -3px -5px;
}
.pick.marked::before {
    inset: -6px -6px -5px -9px;
}
.sections {
    padding-bottom: 11px;
}
fieldset {
    margin: 0 13px 0 0;
    min-width: 0;
    padding: 0 0 5px 9px;
    border: none;
}
fieldset + fieldset {
    padding-top: 3px;
    border-top: 2px solid #c6c6c6;
}
fieldset:last-child {
    padding-bottom: 0;
}
legend {
    display: flex;
    align-items: center;
    gap: 5px;
    float: left;
    width: 100%;
    height: 32px;
    padding: 0;
    font-weight: bold;
}
legend .caret {
    border-left-width: 5px;
    border-right-width: 5px;
    border-top-width: 7px;
}
.row {
    clear: both;
    display: flex;
    align-items: center;
    height: 32px;
}
.row label {
    width: 147px;
    flex: none;
    white-space: nowrap;
}
.pick {
    flex: 1;
    height: 28px;
    position: relative;
}
.pick::after {
    content: "";
    position: absolute;
    right: 4px;
    top: 11px;
    border: 4px solid transparent;
    border-top: 6px solid #333;
    border-bottom: none;
    pointer-events: none;
}
.pick select {
    width: 100%;
    height: 28px;
    padding: 0 12px 0 4px;
    appearance: none;
    border: 1px solid #c0c0c0;
    border-radius: 0;
    background-color: #c8c8c8;
    color: #4a4a4a;
    font: inherit;
}
.row input[type="checkbox"] {
    appearance: none;
    width: 16px;
    height: 16px;
    margin: 0 0 0 2px;
    border: 1px solid #444;
    border-radius: 3px;
    background: linear-gradient(#f0f0f0, #bcbcbc);
    display: flex;
    justify-content: center;
}
.row input[type="checkbox"]:checked {
    background: linear-gradient(#b8b8b8, #ededed);
}
.row input[type="checkbox"]:checked::before {
    content: "";
    width: 6px;
    height: 11px;
    border: solid #111;
    border-width: 0 2px 2px 0;
    transform: rotate(38deg);
}
.num {
    flex: 1;
    min-width: 0;
    display: flex;
    height: 22px;
    margin-left: 3px;
    background-color: #fff;
    border-top: 1px solid #a5a8ad;
    border-bottom: 1px solid #e3e9ef;
}
.num input {
    flex: 1;
    min-width: 0;
    border: none;
    padding: 0 0 1px 4px;
    background: none;
    color: #4a4a4a;
    font: inherit;
}
.spin {
    width: 12px;
    flex: none;
    display: flex;
    flex-direction: column;
    gap: 1px;
}
.spin button {
    flex: 1;
    display: flex;
    justify-content: center;
    align-items: center;
    background-color: #eee;
    border: 1px solid #ddd;
}
.spin button::before {
    content: "";
    border: 2px solid transparent;
}
.spin .up::before {
    border-bottom: 3px solid #111;
    border-top: none;
}
.spin .down::before {
    border-top: 3px solid #111;
    border-bottom: none;
}
.nothing {
    display: flex;
    align-items: center;
    gap: 3px;
    width: 74px;
    height: 29px;
    padding-left: 4px;
    background-color: #c8c8c8;
    border: 1px solid #c2c2c2;
}
.nothing.on {
    background-color: #5789b4;
    border-color: #4a7dab;
    color: #fff;
}
.dialog-foot {
    display: flex;
    justify-content: flex-end;
    gap: 12px;
    padding: 11px 17px 10px;
    border-top: 1px solid #b0b0b0;
    background-color: #d0d0d0;
}
.dialog-foot button {
    width: 60px;
    height: 23px;
    background-color: #e8e8e8;
    border: 1px solid #b5b5b5;
    color: #6b6b6b;
    font-size: 15px;
}
.dialog-foot .marked::before {
    inset: -9px -8px -8px -6px;
}
```
